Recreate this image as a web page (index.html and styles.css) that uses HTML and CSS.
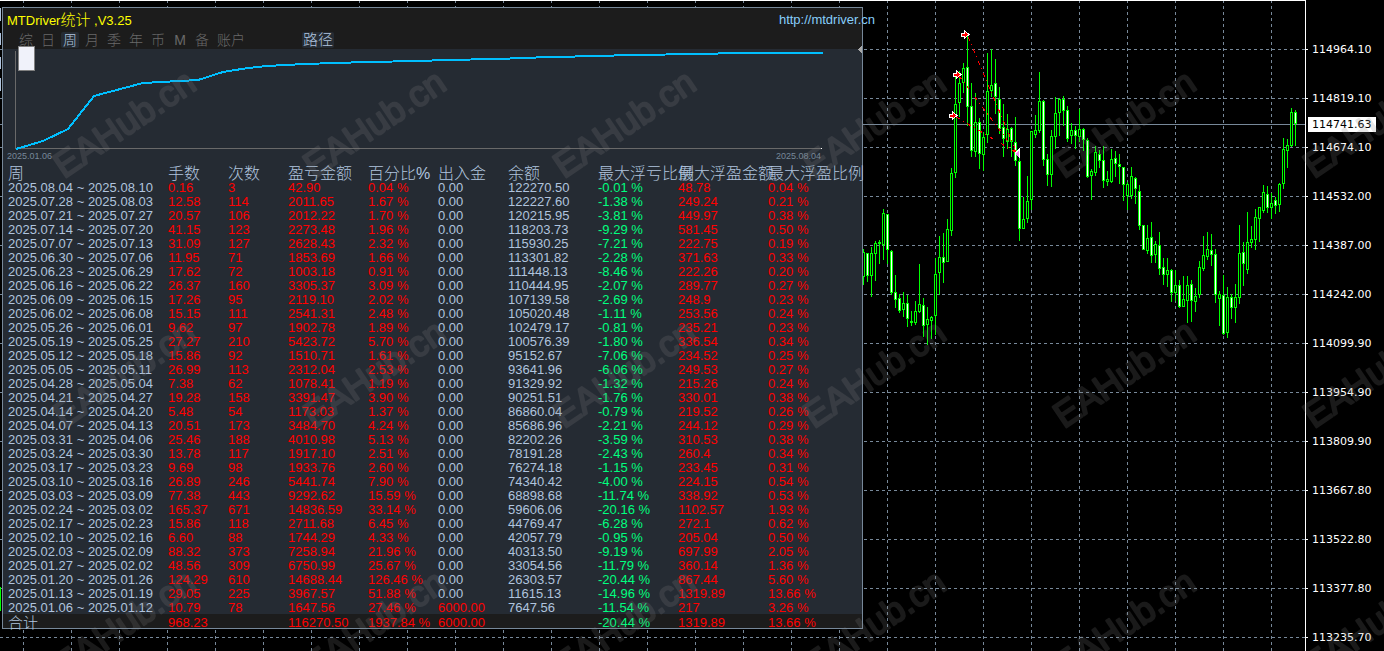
FILE: index.html
```html
<!DOCTYPE html>
<html lang="zh-CN">
<head>
<meta charset="utf-8">
<title>MTDriver统计</title>
<link rel="stylesheet" href="styles.css">
</head>
<body>
<main class="terminal">
  <svg class="plot" id="plot" aria-label="K线图">
    <defs>
      <g id="entry"><path d="M-3.500 -1.500H-.5V-4L4 0L-.5 4V1.500H-3.500Z" fill="#f00" stroke="#fff"/></g>
    </defs>
    <g id="grid" class="grid"></g>
    <line class="bid" x1="0" y1="124.500" x2="100%" y2="124.500"/>
    <g id="candles"></g>
    <g class="trades">
      <path d="M968 37L1017 153M959 76L1017 153M956 117L1017 153"/>
    </g>
    <use href="#entry" x="965" y="34.500"/>
    <use href="#entry" x="957" y="74.500"/>
    <use href="#entry" x="953" y="115.500"/>
    <path d="M1020 149V158L1015 153.500Z" fill="#ee82ee"/>
    <path d="M1015 153.500L1019.500 149V158" fill="none" stroke="#fff"/>
    <g class="edge"><path d="M0 8h1v13h-1zM0 33h1v12h-1zM0 57h1v12h-1zM0 78h1v13h-1z"/></g>
    <rect x="0" y="587" width="1" height="24" fill="#0f0"/>
  </svg>

  <aside class="axis">
    <ol class="prices">
      <li>114964.10</li><li>114819.10</li><li>114674.10</li><li>114532.00</li><li>114387.00</li><li>114242.00</li><li>114099.90</li><li>113954.90</li><li>113809.90</li><li>113667.80</li><li>113522.80</li><li>113377.80</li><li>113235.70</li>
    </ol>
    <output class="last">114741.63</output>
  </aside>

  <section class="panel">
    <header class="head">
      <div class="title-row">
        <h1 class="title">MTDriver<span class="han">统计</span> ,V3.25</h1>
        <a class="site" href="http://mtdriver.cn">http://mtdriver.cn</a>
      </div>
      <nav class="tabs">
        <button class="tab">综</button><button class="tab">日</button><button class="tab on">周</button><button class="tab">月</button><button class="tab">季</button><button class="tab">年</button><button class="tab">币</button><button class="tab">M</button><button class="tab">备</button><button class="tab wide">账户</button>
        <button class="tab wide on path">路径</button>
      </nav>
    </header>
    <figure class="equity">
      <svg class="curve" aria-label="收益曲线">
        <path d="M12.500 2V99.500H818" fill="none" stroke="#696969"/>
        <rect x="818" y="99" width="1" height="1" fill="#fff"/>
        <polyline points="13,100 40,92 65,80 91,47 140,34 195,31 220,23 245,19 264,17 301,15 364,13 416,12 442,11 494,10 520,9 547,8 598,7 624,6 702,5 728,4 820,4" fill="none" stroke="#00bfff" stroke-width="2"/>
        <path d="M859 -3V4L855 .5Z" fill="#a9a9a9"/>
      </svg>
      <button class="thumb" aria-label="滑块"></button>
      <figcaption class="range"><span>2025.01.06</span><span>2025.08.04</span></figcaption>
    </figure>
    <table class="stats">
      <colgroup><col class="c-date"><col class="c-60"><col class="c-60"><col class="c-80"><col class="c-70"><col class="c-70"><col class="c-90"><col class="c-80"><col class="c-90"><col class="c-last"></colgroup>
      <thead><tr><th>周</th><th>手数</th><th>次数</th><th>盈亏金额</th><th>百分比%</th><th>出入金</th><th>余额</th><th>最大浮亏比例</th><th>最大浮盈金额</th><th>最大浮盈比例</th></tr></thead>
      <tbody id="rows"></tbody>
      <tfoot><tr><th>合计</th><td class="up">968.23</td><td></td><td class="up">116270.50</td><td class="up">1937.84 %</td><td class="up">6000.00</td><td></td><td class="down">-20.44 %</td><td class="up">1319.89</td><td class="up">13.66 %</td></tr></tfoot>
    </table>
  </section>

  <svg class="watermark" aria-hidden="true">
    <defs>
      <pattern id="mark" width="250" height="250" patternUnits="userSpaceOnUse">
        <text class="mark" x="0" y="0" transform="translate(64 179) rotate(-34)">EAHub.cn</text>
      </pattern>
    </defs>
    <rect width="100%" height="100%" fill="url(#mark)"/>
  </svg>
</main>
<script src="app.js"></script>
</body>
</html>
```
FILE: styles.css
```css
* { box-sizing: border-box; }
body {
  margin: 0;
  background: #000;
  color: #b0c4de;
  font: 13px/14px "Liberation Sans", "Noto Sans CJK SC", sans-serif;
}
.terminal {
  position: relative;
  display: grid;
  grid-template-columns: 1fr 79px;
  height: 100vh;
  overflow: hidden;
}
.plot {
  width: 100%;
  height: 100%;
  border-top: 1px solid #fff;
  shape-rendering: crispEdges;
}
.plot > * { transform: translateY(-1px); }
.grid line { stroke: #778899; stroke-dasharray: 3 3; }
.bid { stroke: #778899; }
.trades { fill: none; stroke: #f00; stroke-dasharray: 4 4 1 4; }
.edge { fill: #b0c4de; }
.wick { stroke: #0f0; }
.body { fill: #000; stroke: #0f0; }
.fall { fill: #fff; }

.axis {
  position: relative;
  border-left: 1px solid #fff;
  color: #fff;
  font: 11px/14px "DejaVu Sans", sans-serif;
}
.prices { margin: 0; padding: 25px 0 0; list-style: none; }
.prices li { display: flex; align-items: center; gap: 4px; height: 49px; }
.prices li::before { content: ""; width: 2px; height: 1px; background: #fff; }
.last {
  position: absolute;
  top: 117px;
  left: 2px;
  width: 68px;
  padding-left: 4px;
  background: #fff;
  color: #000;
  line-height: 15px;
}

.panel {
  position: absolute;
  top: 7px;
  left: 2px;
  background: #252b33;
  border: 1px solid #778899;
}
.head { height: 41px; background: #1c1c1c; }
.title-row {
  display: flex;
  justify-content: space-between;
  align-items: center;
  height: 24px;
  padding-left: 4px;
  margin-right: -13px;
}
.title { margin: 0; color: #ff0; font-size: 13px; font-weight: 400; white-space: pre; }
.han { font-size: 15px; font-weight: 300; }
.site { color: #87cefa; text-decoration: none; }
.tabs { display: flex; gap: 4px; padding-left: 14px; }
.tab {
  width: 18px;
  height: 16px;
  padding: 0;
  overflow: hidden;
  border: 0;
  border-radius: 2px;
  background: none;
  color: #696969;
  font: 14px/16px "Liberation Sans", "Noto Sans CJK SC", sans-serif;
  font-weight: 300;
}
.tab.wide { width: 32px; }
.tab.on { background: #252b33; color: #b0c4de; }
.path { margin-left: 51px; font-size: 15px; }

.equity { position: relative; height: 116px; margin: 0; }
.curve {
  display: block;
  width: 100%;
  height: 101px;
  overflow: visible;
  shape-rendering: crispEdges;
}
.thumb {
  position: absolute;
  top: -3px;
  left: 15px;
  width: 17px;
  height: 25px;
  padding: 0;
  border: 1px solid #808080;
  background: #f0f2fa;
}
.range {
  display: flex;
  justify-content: space-between;
  width: 818px;
  padding-left: 4px;
  color: #778899;
  font-size: 9px;
  line-height: 12px;
}

.stats { border-collapse: collapse; table-layout: fixed; width: 859px; }
.c-date { width: 165px; }
.c-60 { width: 60px; }
.c-70 { width: 70px; }
.c-80 { width: 80px; }
.c-90 { width: 90px; }
.stats th, .stats td {
  height: 14px;
  padding: 2px 0 0;
  line-height: 12px;
  text-align: left;
  font-weight: 400;
  white-space: nowrap;
}
.stats th:first-child, .stats td:first-child { padding-left: 5px; }
.stats thead th { height: 15px; font-size: 16px; font-weight: 300; line-height: 13px; }
.stats tfoot { background: #1c1c1c; }
.stats tfoot th, .stats tfoot td { padding-top: 4px; line-height: 10px; }
.stats tfoot th { font-size: 15px; font-weight: 300; }
.up { color: #f00; }
.down { color: #00ff7f; }

.watermark {
  position: absolute;
  inset: 0;
  width: 100%;
  height: 100%;
  pointer-events: none;
}
.mark {
  fill: #808080;
  stroke: #808080;
  stroke-width: 2px;
  stroke-linejoin: round;
  opacity: .2;
  font: 36px "Liberation Sans", sans-serif;
}
```
FILE: app.js
```js
// start ~ end | lots | trades | profit | percent | deposit | balance | drawdown | float profit | float percent
const weeks = `2025.08.04 ~ 2025.08.10|0.16|3|42.90|0.04|0.00|122270.50|-0.01|48.78|0.04
2025.07.28 ~ 2025.08.03|12.58|114|2011.65|1.67|0.00|122227.60|-1.38|249.24|0.21
2025.07.21 ~ 2025.07.27|20.57|106|2012.22|1.70|0.00|120215.95|-3.81|449.97|0.38
2025.07.14 ~ 2025.07.20|41.15|123|2273.48|1.96|0.00|118203.73|-9.29|581.45|0.50
2025.07.07 ~ 2025.07.13|31.09|127|2628.43|2.32|0.00|115930.25|-7.21|222.75|0.19
2025.06.30 ~ 2025.07.06|11.95|71|1853.69|1.66|0.00|113301.82|-2.28|371.63|0.33
2025.06.23 ~ 2025.06.29|17.62|72|1003.18|0.91|0.00|111448.13|-8.46|222.26|0.20
2025.06.16 ~ 2025.06.22|26.37|160|3305.37|3.09|0.00|110444.95|-2.07|289.77|0.27
2025.06.09 ~ 2025.06.15|17.26|95|2119.10|2.02|0.00|107139.58|-2.69|248.9|0.23
2025.06.02 ~ 2025.06.08|15.15|111|2541.31|2.48|0.00|105020.48|-1.11|253.56|0.24
2025.05.26 ~ 2025.06.01|9.62|97|1902.78|1.89|0.00|102479.17|-0.81|235.21|0.23
2025.05.19 ~ 2025.05.25|27.27|210|5423.72|5.70|0.00|100576.39|-1.80|336.54|0.34
2025.05.12 ~ 2025.05.18|15.86|92|1510.71|1.61|0.00|95152.67|-7.06|234.52|0.25
2025.05.05 ~ 2025.05.11|26.99|113|2312.04|2.53|0.00|93641.96|-6.06|249.53|0.27
2025.04.28 ~ 2025.05.04|7.38|62|1078.41|1.19|0.00|91329.92|-1.32|215.26|0.24
2025.04.21 ~ 2025.04.27|19.28|158|3391.47|3.90|0.00|90251.51|-1.76|330.01|0.38
2025.04.14 ~ 2025.04.20|5.48|54|1173.03|1.37|0.00|86860.04|-0.79|219.52|0.26
2025.04.07 ~ 2025.04.13|20.51|173|3484.70|4.24|0.00|85686.96|-2.21|244.12|0.29
2025.03.31 ~ 2025.04.06|25.46|188|4010.98|5.13|0.00|82202.26|-3.59|310.53|0.38
2025.03.24 ~ 2025.03.30|13.78|117|1917.10|2.51|0.00|78191.28|-2.43|260.4|0.34
2025.03.17 ~ 2025.03.23|9.69|98|1933.76|2.60|0.00|76274.18|-1.15|233.45|0.31
2025.03.10 ~ 2025.03.16|26.89|246|5441.74|7.90|0.00|74340.42|-4.00|224.15|0.54
2025.03.03 ~ 2025.03.09|77.38|443|9292.62|15.59|0.00|68898.68|-11.74|338.92|0.53
2025.02.24 ~ 2025.03.02|165.37|671|14836.59|33.14|0.00|59606.06|-20.16|1102.57|1.93
2025.02.17 ~ 2025.02.23|15.86|118|2711.68|6.45|0.00|44769.47|-6.28|272.1|0.62
2025.02.10 ~ 2025.02.16|6.60|88|1744.29|4.33|0.00|42057.79|-0.95|205.04|0.50
2025.02.03 ~ 2025.02.09|88.32|373|7258.94|21.96|0.00|40313.50|-9.19|697.99|2.05
2025.01.27 ~ 2025.02.02|48.56|309|6750.99|25.67|0.00|33054.56|-11.79|360.14|1.36
2025.01.20 ~ 2025.01.26|124.29|610|14688.44|126.46|0.00|26303.57|-20.44|867.44|5.60
2025.01.13 ~ 2025.01.19|29.05|225|3967.57|51.88|0.00|11615.13|-14.96|1319.89|13.66
2025.01.06 ~ 2025.01.12|10.79|78|1647.56|27.46|6000.00|7647.56|-11.54|217|3.26`;

const percentColumns = [4, 7, 9];
document.getElementById('rows').innerHTML = weeks.split('\n').map(line =>
  '<tr>' + line.split('|').map((value, i) => {
    const neutral = i === 0 || i === 6 || (i === 5 && value === '0.00');
    const tone = neutral ? '' : i === 7 ? 'down' : 'up';
    return `<td class="${tone}">${value}${percentColumns.includes(i) ? ' %' : ''}</td>`;
  }).join('') + '</tr>').join('');

let grid = '';
for (let x = 23.5; x < 2400; x += 48) grid += `<line x1="${x}" y1="0" x2="${x}" y2="100%"/>`;
for (let y = 49.5; y < 1600; y += 49) grid += `<line x1="0" y1="${y}" x2="100%" y2="${y}"/>`;
document.getElementById('grid').innerHTML = grid;

// high, open/close top, open/close bottom, low, in thirds of a pixel; f marks a falling bar
const early = `688 697 772 795,700 700 767 785 f,680 700 767 830,663 670 703 783,660 667 670 732,567 580 676 720,583 583 691 732 f,690 694 818 825 f,765 817 839 864 f,822 835 873 879 f,815 850 871 890,825 850 898 920 f,872 903 910 917,842 873 910 914,732 853 875 880,833 855 919 950 f,860 897 916 975,888 892 904 958,715 763 889 945,648 712 760 825,640 712 728 788 f,597 628 725 725,444 460 632 648,170 252 458 474,153 190 250 290,129 144 190 219,45 142 260 318 f,190 259 392 411 f,220 306 395 411,295 307 402 447 f,337 352 404 453,100 213 346 370,87 195 213 230,117 190 230 283 f,201 238 326 342 f,252 322 356 411 f,282 328 365 387,322 325 365 411 f,291 367 422 438 f,400 424 626 662 f,531 598 626 627,468 544 596 608,333 334 539 570,285 331 344 354,156 244 334 339,240 243 419 438 f,402 418 464 498 f,330 349 466 500,231 280 352 386,234 237 280 348,229 236 272 318 f,258 270 356 366 f,309 331 349 371,318 331 347 387 f`;
const late = `88 148 170 185,145 148 179 212 f,175 181 290 293 f,268 274 287 360,198 217 280 288,210 222 242 264 f,198 241 302 323 f,273 298 307 318,207 238 307 308,213 235 253 291 f,222 253 262 312 f,262 262 316 362 f,305 313 349 391,261 289 349 356,291 293 328 372 f,315 334 437 450 f,435 436 509 510 f,435 475 512 521,426 472 527 548 f,484 493 524 548,456 496 566 584 f,534 562 584 614 f,534 571 584 620,567 569 638 666 f,570 616 640 664,600 616 682 684 f,588 658 680 681,588 616 662 729,600 613 664 725 f,624 649 665 696,543 562 644 654,468 526 566 572,456 508 530 540,462 511 524 558 f,507 523 646 668 f,633 643 656 739,585 646 763 765 f,621 652 760 774,643 652 683 717 f,612 652 683 729,435 520 653 671,486 517 553 617 f,396 487 569 581,438 478 490 504,388 412 479 510,382 382 416 486,315 337 392 398,318 343 383 399 f,338 370 383 416,352 361 377 402 f,309 313 374 396,174 208 311 327,177 196 214 264,84 97 197 202,90 97 133 197 f`;

const read = (text, base) => text.split(',').map(item => {
  const [high, top, bottom, low, fall] = item.split(' ');
  return { values: [high, top, bottom, low].map(v => base + Math.round(v / 3)), fall };
});

document.getElementById('candles').innerHTML = [...read(early, 20), ...read(late, 80)].map((bar, i) => {
  const x = 863 + i * 4;
  const [high, top, bottom, low] = bar.values;
  const height = Math.max(1, bottom - top - 1);
  return `<line class="wick" x1="${x + 0.5}" y1="${high}" x2="${x + 0.5}" y2="${low}"/>` +
    `<rect class="body ${bar.fall ? 'fall' : ''}" x="${x - 0.5}" y="${top + 0.5}" width="2" height="${height}"/>`;
}).join('');
```
